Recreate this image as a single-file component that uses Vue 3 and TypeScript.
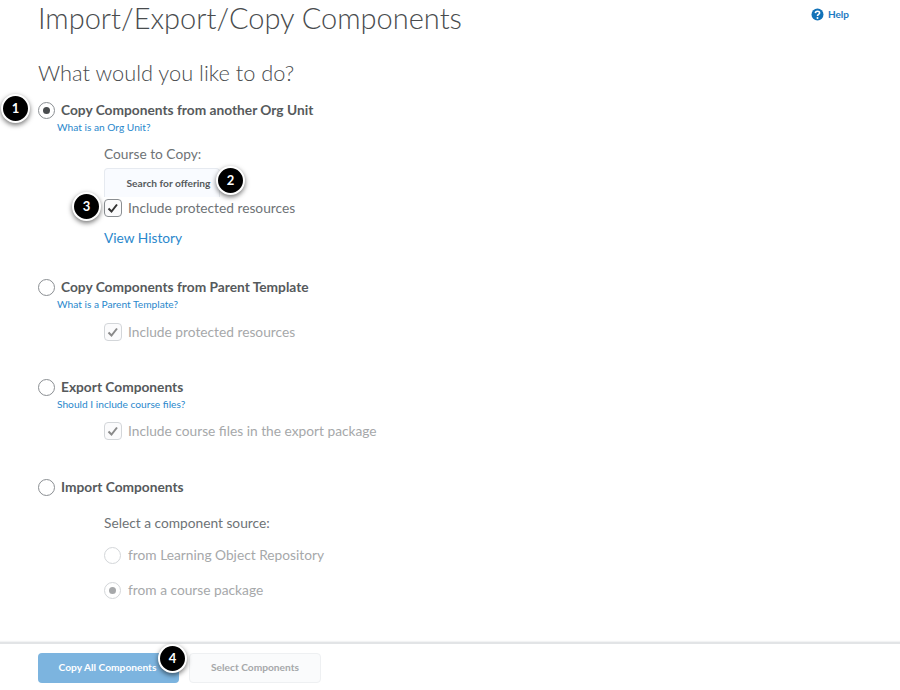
<script setup lang="ts">
const checkPath = 'M3.5 8.5 L6.5 11.5 L12 4.5'
</script>

<template>
  <div class="page">
    <main class="main">
      <header class="head">
        <h1>Import/Export/Copy Components</h1>
        <a class="help">
          <svg width="13" height="13" viewBox="0 0 13 13">
            <circle cx="6.5" cy="6.5" r="6" fill="#1272b8" />
            <path d="M4.4 5.1 C4.5 2.7 8.6 2.7 8.6 5 C8.6 6.5 6.5 6.3 6.5 7.9" fill="none" stroke="#fff" stroke-width="1.6" />
            <circle cx="6.5" cy="10" r="1" fill="#fff" />
          </svg>
          Help
        </a>
      </header>
      <h2>What would you like to do?</h2>

      <section class="opt first">
        <div class="opt-row">
          <span class="radio on"><i></i></span>
          <span class="opt-label">Copy Components from another Org Unit</span>
          <span class="badge b1">1</span>
        </div>
        <a class="mini">What is an Org Unit?</a>
        <div class="sub">
          <div class="field-label">Course to Copy:</div>
          <div class="search-wrap">
            <button class="search">Search for offering</button>
            <span class="badge b2">2</span>
          </div>
          <div class="check-row main-check">
            <span class="badge b3">3</span>
            <span class="check">
              <svg width="16" height="16" viewBox="0 0 16 16"><path :d="checkPath" fill="none" stroke="#333" stroke-width="2" /></svg>
            </span>
            <span class="check-text">Include protected resources</span>
          </div>
          <a class="history">View History</a>
        </div>
      </section>

      <section class="opt second">
        <div class="opt-row">
          <span class="radio"></span>
          <span class="opt-label">Copy Components from Parent Template</span>
        </div>
        <a class="mini">What is a Parent Template?</a>
        <div class="sub">
          <div class="check-row off tight">
            <span class="check">
              <svg width="16" height="16" viewBox="0 0 16 16"><path :d="checkPath" fill="none" stroke="#8a8a8a" stroke-width="2" /></svg>
            </span>
            <span class="check-text">Include protected resources</span>
          </div>
        </div>
      </section>

      <section class="opt third">
        <div class="opt-row">
          <span class="radio"></span>
          <span class="opt-label">Export Components</span>
        </div>
        <a class="mini">Should I include course files?</a>
        <div class="sub">
          <div class="check-row off tight export">
            <span class="check">
              <svg width="16" height="16" viewBox="0 0 16 16"><path :d="checkPath" fill="none" stroke="#8a8a8a" stroke-width="2" /></svg>
            </span>
            <span class="check-text">Include course files in the export package</span>
          </div>
        </div>
      </section>

      <section class="opt fourth">
        <div class="opt-row">
          <span class="radio"></span>
          <span class="opt-label">Import Components</span>
        </div>
        <div class="sub">
          <div class="field-label source">Select a component source:</div>
          <div class="src-row">
            <span class="radio faded"></span>
            <span class="check-text">from Learning Object Repository</span>
          </div>
          <div class="src-row second-src">
            <span class="radio faded on"><i></i></span>
            <span class="check-text">from a course package</span>
          </div>
        </div>
      </section>
    </main>

    <footer class="foot">
      <div class="primary-wrap">
        <button class="btn primary">Copy All Components</button>
        <span class="badge b4">4</span>
      </div>
      <button class="btn secondary">Select Components</button>
    </footer>
  </div>
</template>

<style>
html, body { margin: 0; background: #fff; }
</style>

<style scoped>
* { box-sizing: border-box; }
.page {
  width: 900px;
  height: 690px;
  display: flex;
  flex-direction: column;
  overflow: hidden;
  font-family: Lato, "Open Sans", sans-serif;
  color: #565a5c;
}
.main { flex: 1; padding: 0 51px 0 38px; }
.head { display: flex; justify-content: space-between; align-items: flex-start; }
h1 {
  margin: 0;
  font-size: 29px;
  line-height: 36px;
  font-weight: 300;
  color: #494c4e;
}
.help {
  display: flex;
  align-items: center;
  gap: 4px;
  margin-top: 8px;
  font-size: 10px;
  font-weight: 700;
  line-height: 13px;
  color: #1b7ac2;
}
h2 {
  margin: 24px 0 0;
  font-size: 21.8px;
  line-height: 26px;
  font-weight: 300;
  color: #494c4e;
}
.opt-row { position: relative; display: flex; align-items: center; gap: 6px; height: 18px; }
.opt.first { margin-top: 15px; }
.opt.second { margin-top: 31px; }
.opt.third { margin-top: 37px; }
.opt.fourth { margin-top: 38px; }
.radio {
  flex: none;
  width: 17px;
  height: 17px;
  border-radius: 50%;
  border: 1.5px solid #8a8e92;
  background: #fff;
  display: flex;
  align-items: center;
  justify-content: center;
}
.radio i { width: 7px; height: 7px; border-radius: 50%; background: #494c4e; }
.radio.faded { border-color: #d3d6d9; }
.radio.faded i { background: #a6a8aa; }
.opt-label { font-size: 13.74px; font-weight: 700; line-height: 18px; color: #565a5c; }
.mini {
  display: block;
  margin: 1px 0 0 19px;
  font-size: 10.2px;
  line-height: 14px;
  color: #2a88cc;
}
.sub { padding-left: 66px; }
.field-label { margin-top: 11px; font-size: 13.74px; line-height: 18px; color: #6e7376; }
.search-wrap { position: relative; margin-top: 5px; width: 116px; height: 29px; }
.search {
  width: 116px;
  height: 29px;
  padding: 0 0 0 13px;
  border: 1px solid #e6eaf0;
  border-bottom: 0;
  border-radius: 4px 4px 0 0;
  background: #f9fbff;
  font: 700 10.2px Lato, sans-serif;
  color: #565a5c;
}
.check-row { position: relative; display: flex; align-items: center; gap: 6px; height: 18px; }
.check-row.main-check { margin-top: 2px; }
.check-row.tight { margin-top: 12px; }
.check-row.export { margin-top: 11px; }
.check {
  flex: none;
  width: 18px;
  height: 18px;
  border: 1.5px solid #8a8e92;
  border-radius: 4px;
  background: #fbfbfc;
  display: flex;
  align-items: center;
  justify-content: center;
}
.check-text { font-size: 13.74px; line-height: 18px; color: #6e7376; }
.off .check { border-color: #d3d6d9; }
.off .check-text, .src-row .check-text { color: #a6a8aa; }
.history {
  display: block;
  margin-top: 12px;
  font-size: 13.74px;
  line-height: 18px;
  color: #2a88cc;
}
.field-label.source { margin-top: 18px; }
.src-row { display: flex; align-items: center; gap: 7px; height: 18px; margin-top: 14px; }
.src-row.second-src { margin-top: 17px; }
.foot {
  flex: none;
  height: 48px;
  border-top: 2px solid #e2e4e6;
  box-shadow: 0 -1px 1px #f2f3f4;
  padding: 9px 0 0 38px;
  display: flex;
  align-items: flex-start;
  gap: 10px;
}
.primary-wrap { position: relative; }
.btn {
  display: block;
  height: 30px;
  padding-bottom: 4px;
  border-radius: 4px;
  font: 700 10.2px Lato, sans-serif;
}
.primary {
  width: 141px;
  padding-left: 0;
  padding-right: 2px;
  border: 0;
  background: #7cb4df;
  color: #fff;
  text-align: center;
}
.secondary {
  width: 132px;
  border: 1px solid #eef0f2;
  background: #fafbfc;
  color: #a6a8aa;
}
.badge {
  position: absolute;
  width: 29px;
  height: 29px;
  border-radius: 50%;
  background: #000;
  border: 2px solid #fff;
  box-shadow: 0 2px 5px rgba(0, 0, 0, 0.55);
  color: #fff;
  font-size: 13px;
  font-weight: 700;
  line-height: 25px;
  text-align: center;
}
.b1 { left: -37px; top: -7px; }
.b2 { left: 112px; top: -2px; }
.b3 { left: -32px; top: -7px; }
.b4 { left: 120px; top: -9px; }
</style>
